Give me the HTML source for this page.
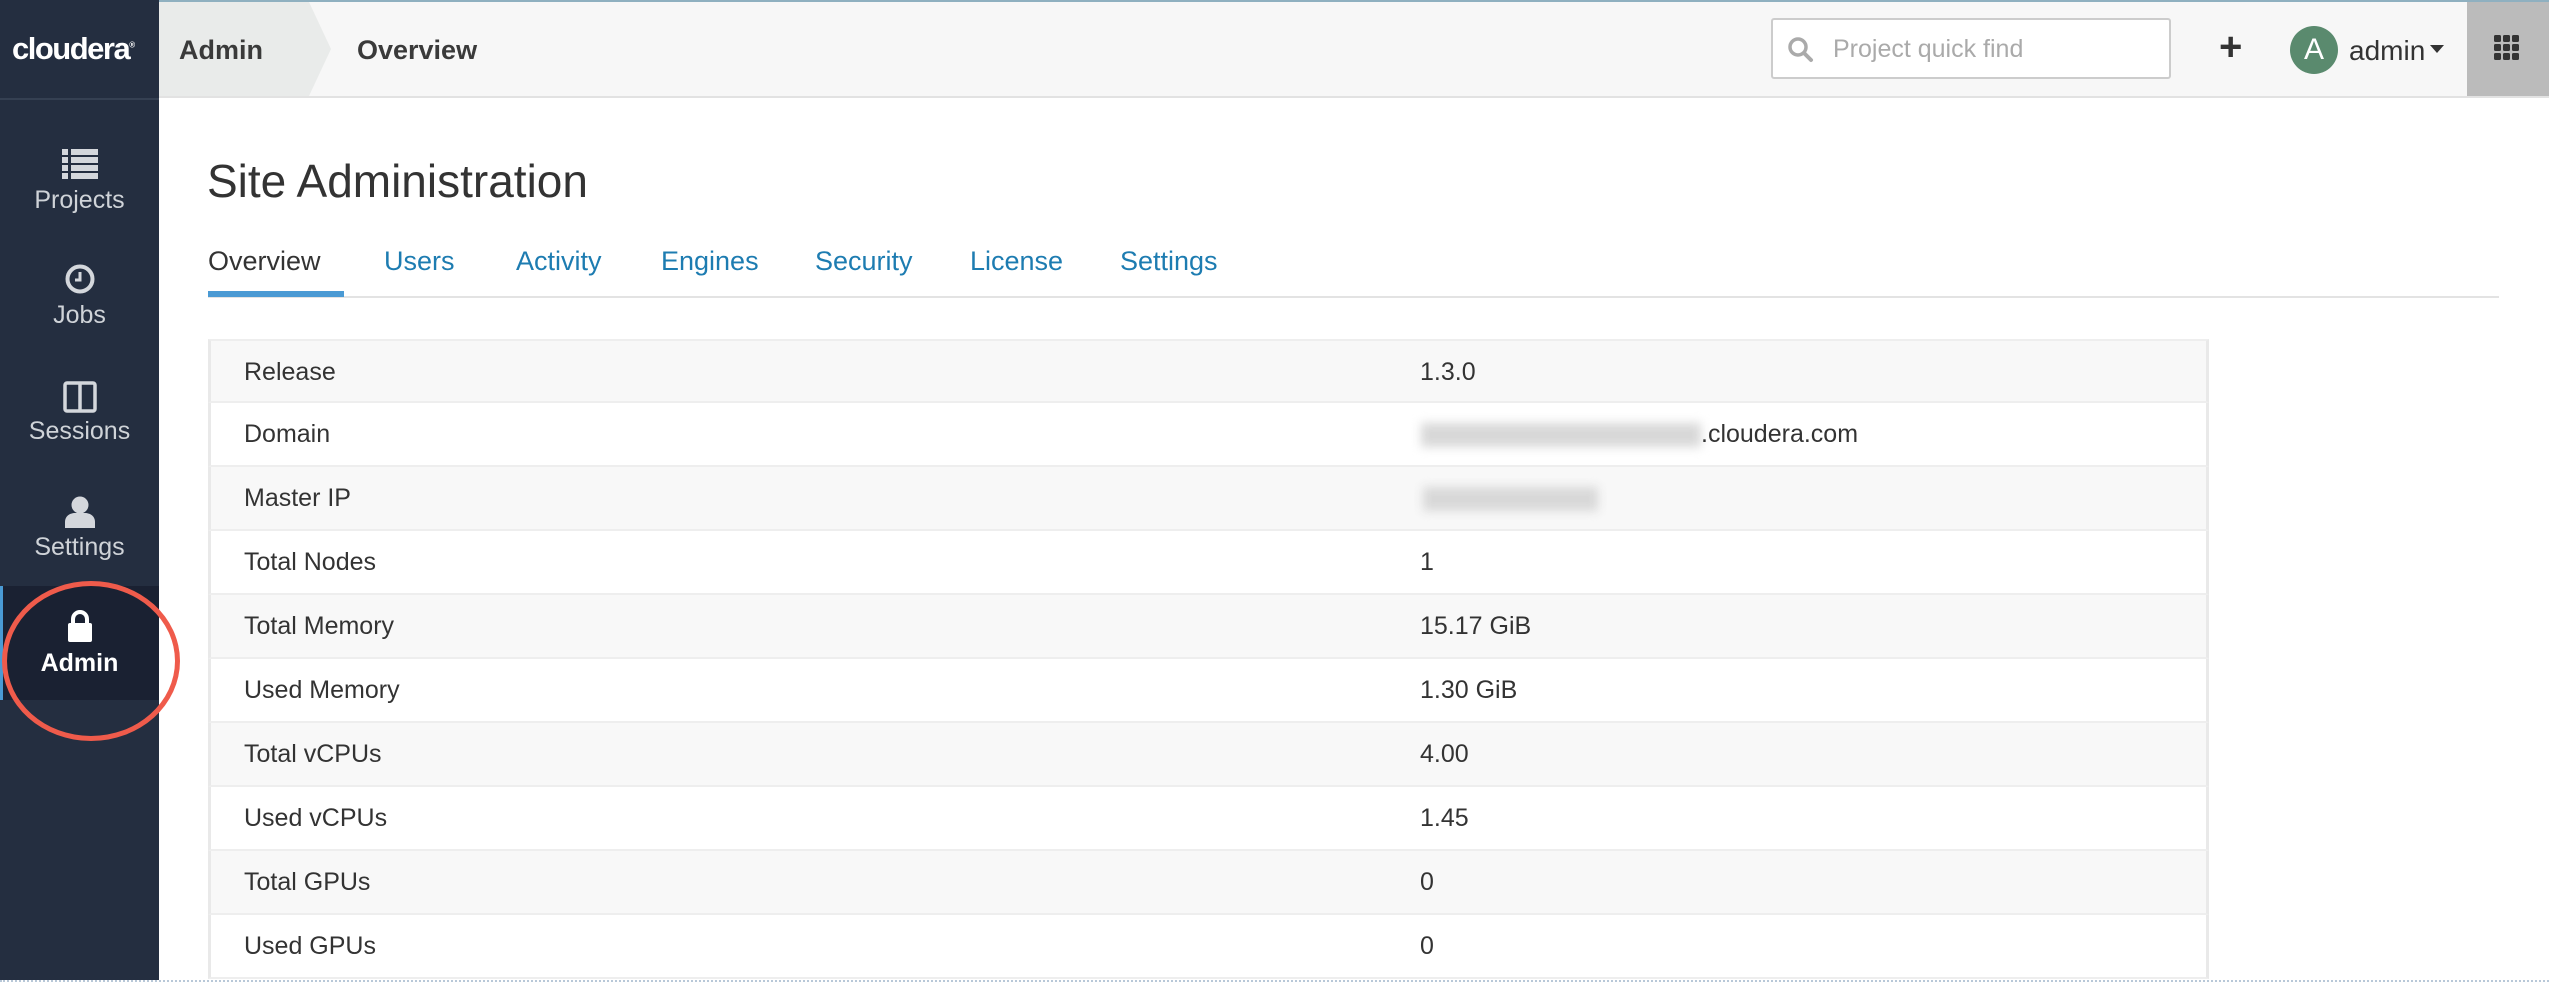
<!DOCTYPE html>
<html><head><meta charset="utf-8"><style>
*{margin:0;padding:0;box-sizing:border-box}
body{width:2549px;height:987px;overflow:hidden;background:#fff;font-family:"Liberation Sans",Arial,sans-serif;position:relative;color:#333}
.abs{position:absolute}
#top{left:0;top:0;width:2549px;height:98px;background:#f7f7f7;border-top:2px solid #8fb0c0;border-bottom:2px solid #e2e2e2}
#side{left:0;top:0;width:159px;height:980px;background:#242e40}
.logo{left:12px;top:31px;color:#fff;font-weight:bold;font-size:31px;letter-spacing:-1.5px}
.crumb{left:159px;top:2px;width:172px;height:94px;background:#e9ebea;clip-path:polygon(0 0,150px 0,172px 47px,150px 94px,0 94px)}
.ht{font-weight:bold;font-size:27px;color:#3a3a3a;top:35px}
.nav{width:159px;text-align:center;color:#cfd3d8;font-size:25px}
.tab{top:246px;font-size:27px;color:#1d7cb1}
.row{left:208px;width:2001px;height:64px;border-left:3px solid #e9e9e9;border-right:3px solid #e9e9e9;border-bottom:2px solid #eee}
.row span{position:absolute;top:17px;font-size:25px;color:#333}
.row .l{left:33px}.row .v{left:1209px}
.blur{position:absolute;background:#d8d8d8;filter:blur(5px);height:24px;top:20px}
</style></head><body>
<div id="top" class="abs"></div>
<div class="abs crumb"></div>
<div class="abs ht" style="left:179px">Admin</div>
<div class="abs ht" style="left:357px">Overview</div>
<div class="abs" style="left:1771px;top:18px;width:400px;height:61px;background:#fff;border:2px solid #ccc;border-radius:3px">
<svg class="abs" style="left:14px;top:16px" width="28" height="28" viewBox="0 0 28 28"><circle cx="11" cy="11" r="8" fill="none" stroke="#aaa" stroke-width="3.5"/><path d="M17 17l7 7" stroke="#aaa" stroke-width="4" stroke-linecap="round"/></svg>
<div class="abs" style="left:60px;top:15px;font-size:25px;color:#aaa">Project quick find</div></div>
<div class="abs" style="left:2219px;top:25px;font-size:40px;font-weight:bold;color:#333">+</div>
<div class="abs" style="left:2290px;top:26px;width:48px;height:48px;border-radius:50%;background:#5a8a6e;color:#fff;font-size:30px;text-align:center;line-height:48px">A</div>
<div class="abs" style="left:2349px;top:35px;font-size:28px;color:#333">admin</div>
<div class="abs" style="left:2430px;top:45px;border:7px solid transparent;border-top:8px solid #333"></div>
<div class="abs" style="left:2467px;top:2px;width:82px;height:94px;background:#bbb"></div>
<svg class="abs" style="left:2494px;top:35px" width="26" height="26" viewBox="0 0 26 26" fill="#333"><rect x="0" y="0" width="7" height="7" rx="1.5"/><rect x="9" y="0" width="7" height="7" rx="1.5"/><rect x="18" y="0" width="7" height="7" rx="1.5"/><rect x="0" y="9" width="7" height="7" rx="1.5"/><rect x="9" y="9" width="7" height="7" rx="1.5"/><rect x="18" y="9" width="7" height="7" rx="1.5"/><rect x="0" y="18" width="7" height="7" rx="1.5"/><rect x="9" y="18" width="7" height="7" rx="1.5"/><rect x="18" y="18" width="7" height="7" rx="1.5"/></svg>

<div id="side" class="abs"></div>
<div class="abs" style="left:0;top:98px;width:159px;height:2px;background:#354052"></div>
<div class="abs logo">cloudera<sup style="font-size:8px">®</sup></div>
<div class="abs" style="left:0;top:586px;width:159px;height:114px;background:#1a2132;border-left:3px solid #4a9ad4"></div>
<svg class="abs" style="left:62px;top:149px" width="36" height="30" viewBox="0 0 36 30" fill="#d4d7dc"><rect x="0" y="0" width="6" height="6"/><rect x="9" y="0" width="27" height="6"/><rect x="0" y="8" width="6" height="6"/><rect x="9" y="8" width="27" height="6"/><rect x="0" y="16" width="6" height="6"/><rect x="9" y="16" width="27" height="6"/><rect x="0" y="24" width="6" height="6"/><rect x="9" y="24" width="27" height="6"/></svg>
<div class="abs nav" style="top:186px">Projects</div>
<svg class="abs" style="left:65px;top:264px" width="30" height="30" viewBox="0 0 30 30"><circle cx="15" cy="15" r="12.5" fill="none" stroke="#d4d7dc" stroke-width="4"/><path d="M15 8v8h-5" fill="none" stroke="#d4d7dc" stroke-width="3"/></svg>
<div class="abs nav" style="top:301px">Jobs</div>
<svg class="abs" style="left:63px;top:381px" width="34" height="32" viewBox="0 0 34 32"><rect x="2" y="2" width="30" height="28" rx="2" fill="none" stroke="#d4d7dc" stroke-width="3.5"/><path d="M17 2v28" stroke="#d4d7dc" stroke-width="3.5"/></svg>
<div class="abs nav" style="top:417px">Sessions</div>
<svg class="abs" style="left:65px;top:496px" width="30" height="32" viewBox="0 0 30 32" fill="#d4d7dc"><circle cx="15" cy="9" r="8.5"/><path d="M0 32v-6c0-6 5-9 10-9h10c5 0 10 3 10 9v6z"/></svg>
<div class="abs nav" style="top:533px">Settings</div>
<svg class="abs" style="left:68px;top:610px" width="24" height="32" viewBox="0 0 24 32"><path d="M5 14V9a7 7 0 0 1 14 0v5" fill="none" stroke="#fff" stroke-width="4"/><rect x="0" y="13" width="24" height="19" rx="2" fill="#fff"/></svg>
<div class="abs nav" style="top:649px;color:#fff;font-weight:bold">Admin</div>
<div class="abs" style="left:2px;top:581px;width:178px;height:160px;border:5px solid #ef5b4b;border-radius:50%"></div>

<div class="abs" style="left:207px;top:154px;font-size:46px;color:#333">Site Administration</div>
<div class="abs tab" style="left:208px;color:#333">Overview</div>
<div class="abs tab" style="left:384px">Users</div>
<div class="abs tab" style="left:516px">Activity</div>
<div class="abs tab" style="left:661px">Engines</div>
<div class="abs tab" style="left:815px">Security</div>
<div class="abs tab" style="left:970px">License</div>
<div class="abs tab" style="left:1120px">Settings</div>
<div class="abs" style="left:208px;top:296px;width:2291px;height:2px;background:#e3e3e3"></div>
<div class="abs" style="left:208px;top:291px;width:136px;height:6px;background:#4a9ad4"></div>

<div class="abs row" style="top:339px;background:#f8f8f8;border-top:2px solid #eee"><span class="l">Release</span><span class="v">1.3.0</span></div>
<div class="abs row" style="top:403px;background:#fff"><span class="l">Domain</span><div class="blur" style="left:1210px;width:280px"></div><span class="v" style="left:1490px">.cloudera.com</span></div>
<div class="abs row" style="top:467px;background:#f8f8f8"><span class="l">Master IP</span><div class="blur" style="left:1212px;width:175px"></div></div>
<div class="abs row" style="top:531px;background:#fff"><span class="l">Total Nodes</span><span class="v">1</span></div>
<div class="abs row" style="top:595px;background:#f8f8f8"><span class="l">Total Memory</span><span class="v">15.17 GiB</span></div>
<div class="abs row" style="top:659px;background:#fff"><span class="l">Used Memory</span><span class="v">1.30 GiB</span></div>
<div class="abs row" style="top:723px;background:#f8f8f8"><span class="l">Total vCPUs</span><span class="v">4.00</span></div>
<div class="abs row" style="top:787px;background:#fff"><span class="l">Used vCPUs</span><span class="v">1.45</span></div>
<div class="abs row" style="top:851px;background:#f8f8f8"><span class="l">Total GPUs</span><span class="v">0</span></div>
<div class="abs row" style="top:915px;background:#fff"><span class="l">Used GPUs</span><span class="v">0</span></div>
<div class="abs" style="left:0;top:980px;width:2549px;height:7px;background:#fff;border-top:2px dotted #b8c8d8"></div>
</body></html>
